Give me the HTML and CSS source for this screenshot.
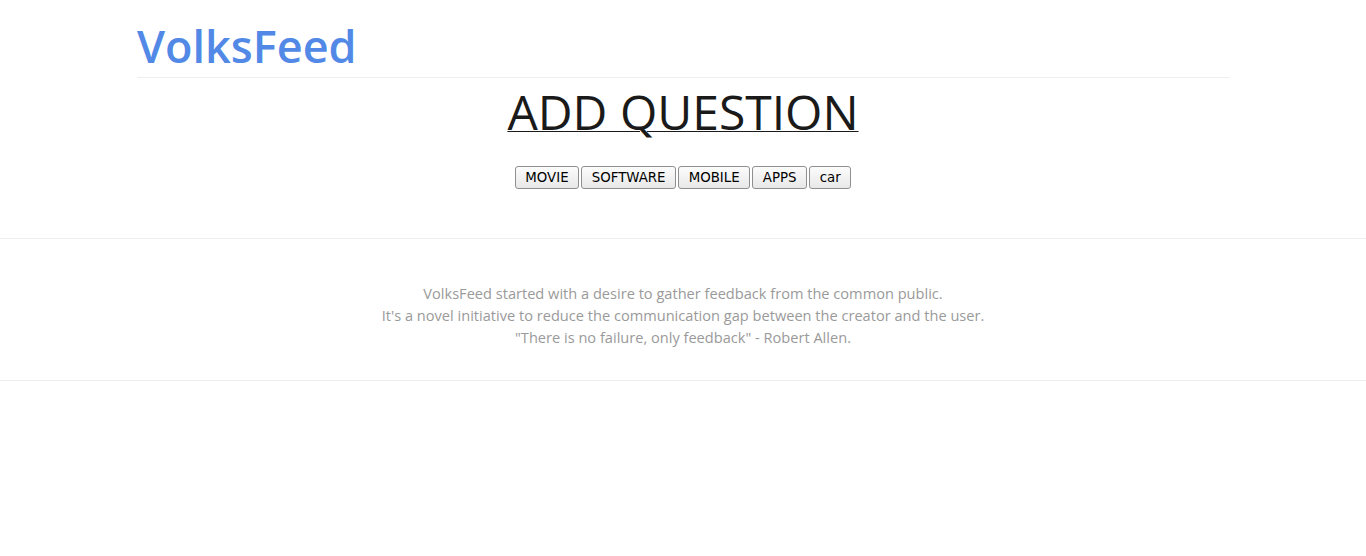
FILE: index.html
```html
<!DOCTYPE html>
<html>
<head>
<meta charset="utf-8">
<title>VolksFeed</title>
<link rel="stylesheet" href="styles.css">
</head>
<body>
<div class="container">
  <header class="header">
    <h1 class="brand">VolksFeed</h1>
  </header>
  <div class="main">
    <h2 class="title"><a href="#">ADD QUESTION</a></h2>
    <div class="cats">
      <button class="cat">MOVIE</button>
      <button class="cat">SOFTWARE</button>
      <button class="cat">MOBILE</button>
      <button class="cat">APPS</button>
      <button class="cat">car</button>
    </div>
  </div>
</div>
<footer class="footer">
  <p>VolksFeed started with a desire to gather feedback from the common public.<br>
  It's a novel initiative to reduce the communication gap between the creator and the user.<br>
  "There is no failure, only feedback" - Robert Allen.</p>
</footer>
</body>
</html>
```
FILE: styles.css
```css
body {
  margin: 0;
  font-family: "Open Sans", sans-serif;
  background: #fff;
}
.container {
  width: 1092px;
  margin: 0 auto;
}
.header {
  border-bottom: 1px solid #eee;
  height: 78px;
  box-sizing: border-box;
}
.brand {
  margin: 0;
  padding-top: 16px;
  font-size: 45px;
  font-weight: 600;
  line-height: 60px;
  color: #5289e6;
}
.main {
  text-align: center;
  padding-bottom: 49px;
}
.title {
  margin: 0;
  padding-top: 2px;
  font-size: 48px;
  font-weight: 400;
  line-height: 64px;
}
.title a {
  color: #1a1a1a;
  text-decoration: underline;
  text-decoration-thickness: 1px;
}
.cats {
  margin-top: 22px;
  display: flex;
  justify-content: center;
  gap: 2px;
}
.cat {
  font-family: "DejaVu Sans", sans-serif;
  font-size: 13.33px;
  color: #000;
  height: 23px;
  padding: 0 9.6px;
  border: 1px solid #8f8f8f;
  border-radius: 3px;
  background: linear-gradient(#fcfcfc, #e8e8e8);
  line-height: 20px;
}
.footer {
  border-top: 1px solid #eee;
  border-bottom: 1px solid #eee;
  text-align: center;
  padding: 43px 0 32px;
}
.footer p {
  margin: 0;
  color: #9a9a9a;
  font-size: 14.6px;
  line-height: 22px;
}
```
